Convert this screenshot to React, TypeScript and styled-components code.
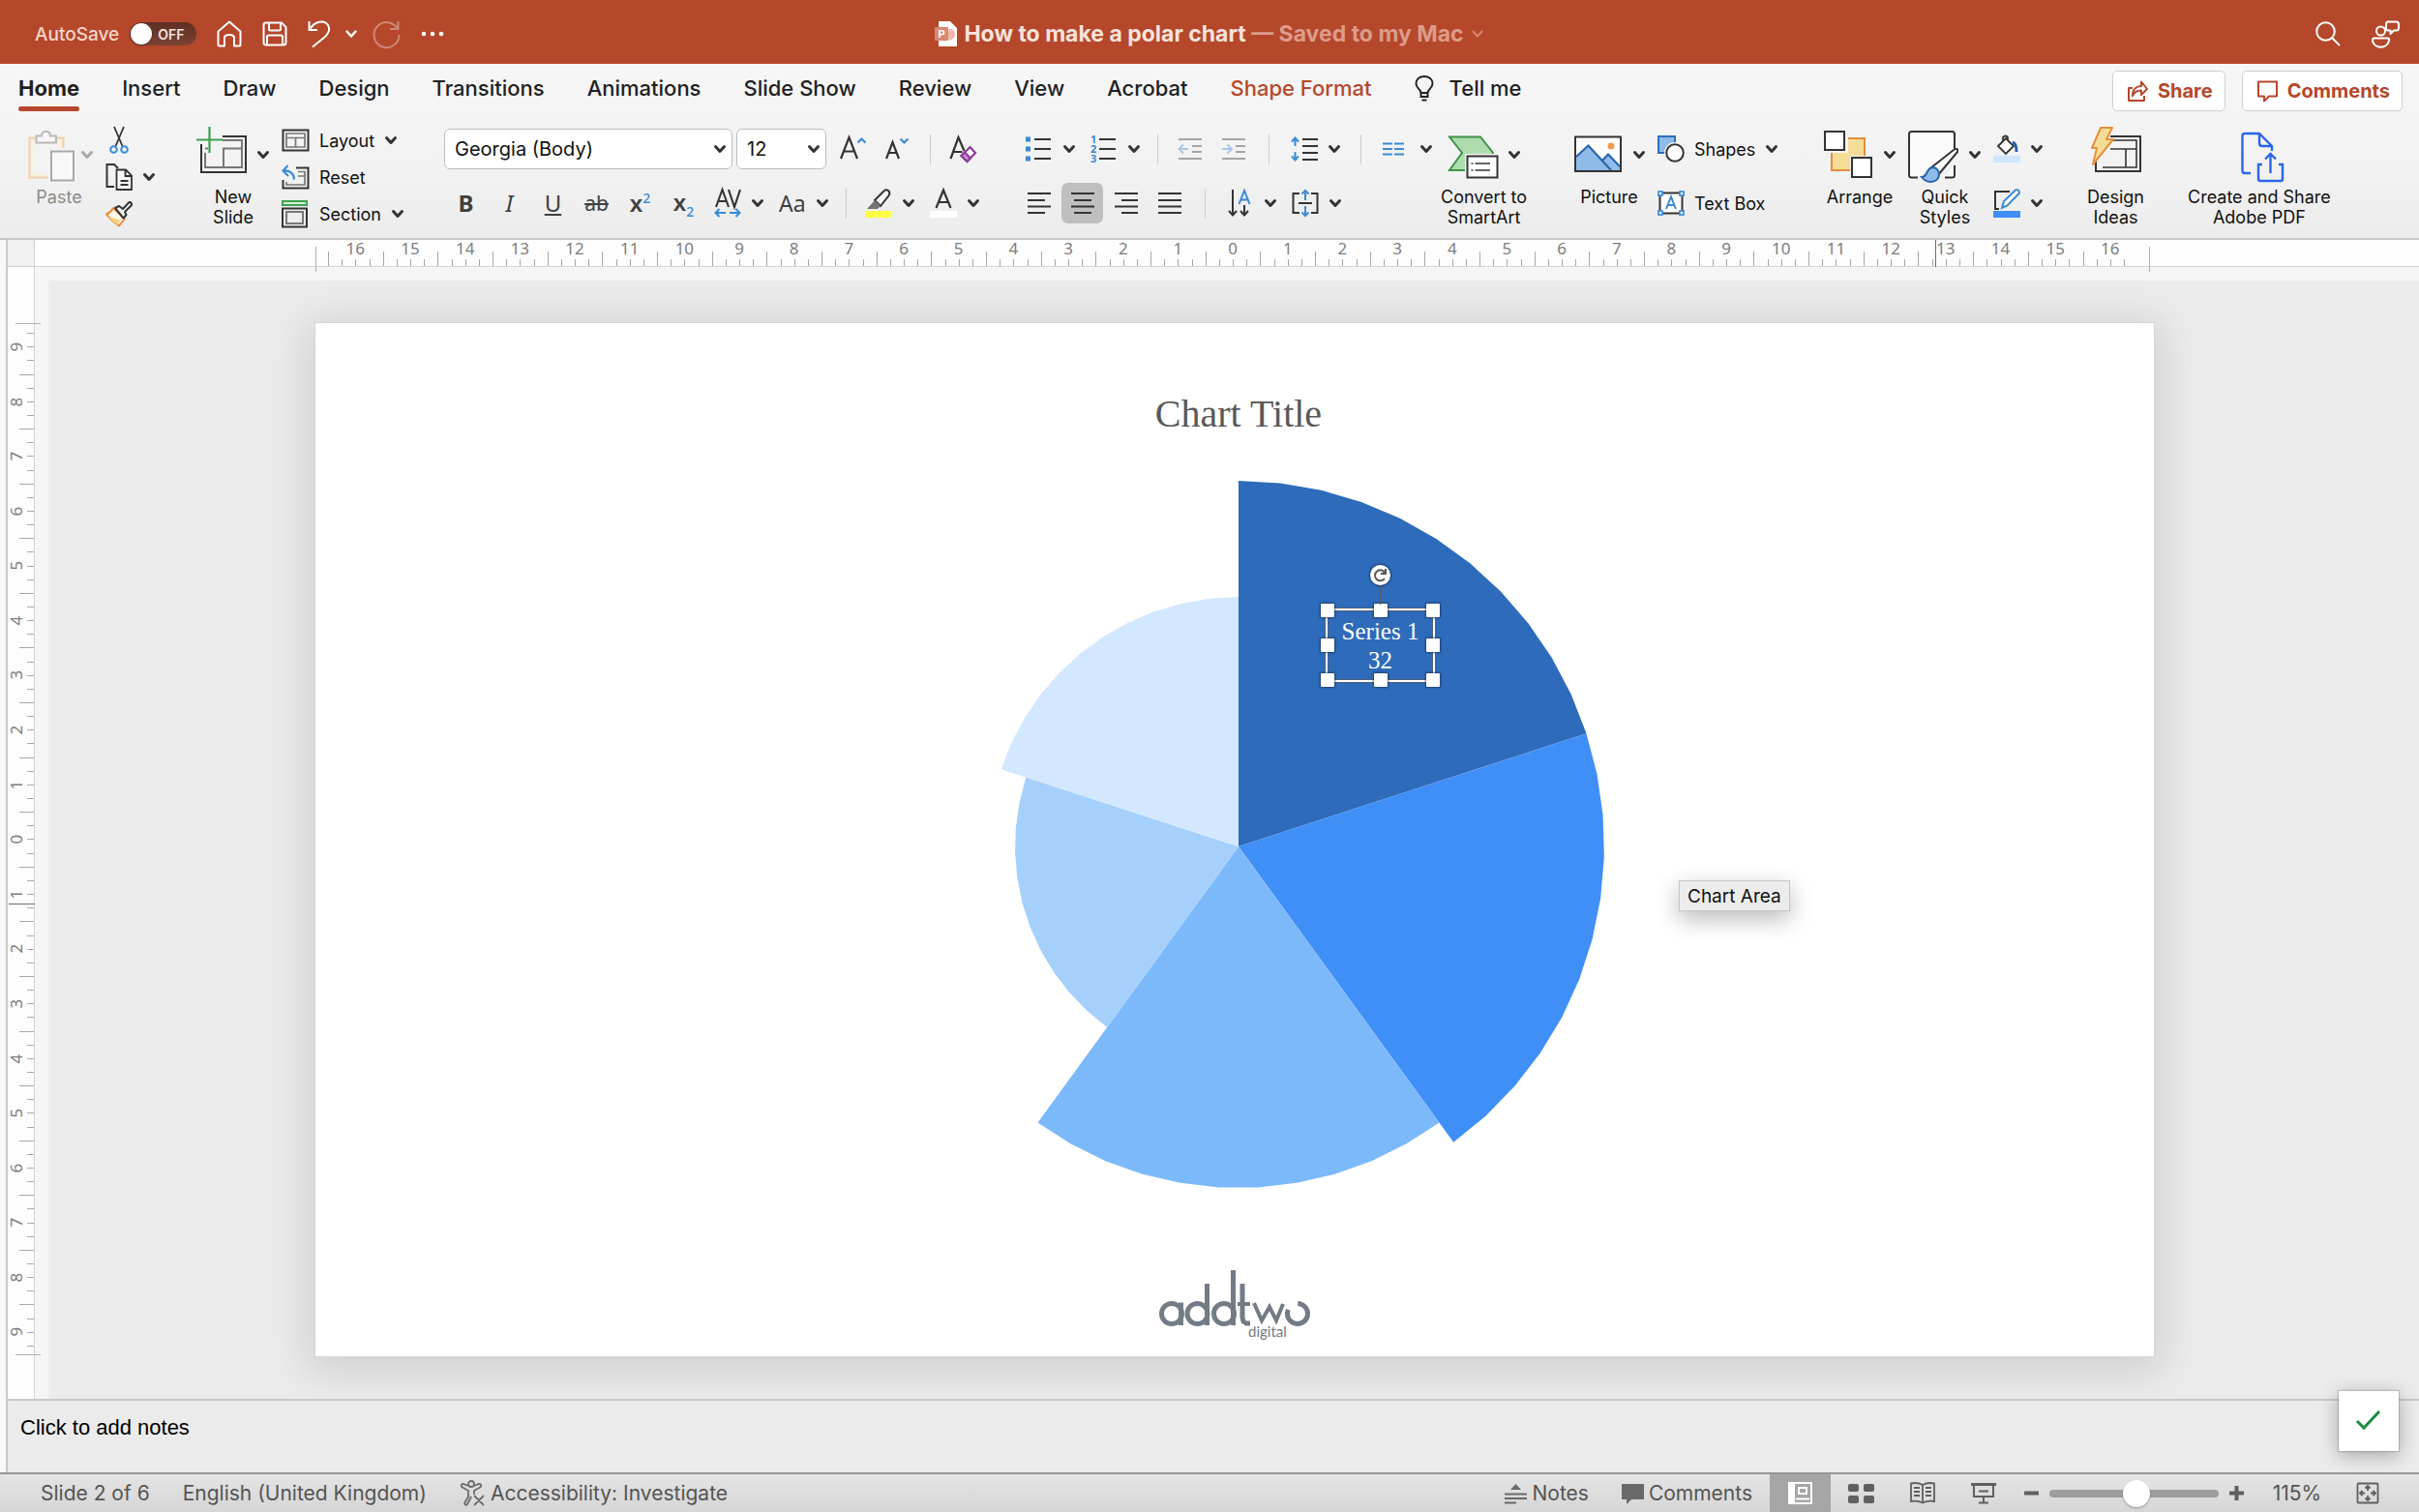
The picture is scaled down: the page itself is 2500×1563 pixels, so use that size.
import React from 'react';
import styled, { createGlobalStyle } from 'styled-components';

const UI = '"Inter", "Roboto", "Liberation Sans", sans-serif';
const RULER = '"Noto Sans", "DejaVu Sans", sans-serif';
const SERIF = 'Georgia, "Liberation Serif", serif';
const RED = '#b5472b';
const INK = '#333333';
const BLUE = '#3b8ad6';

const GlobalStyle = createGlobalStyle`
  *, *::before, *::after { box-sizing: border-box; }
  body { margin: 0; font-family: ${UI}; color: #111; background: #ebebeb; }
  button, select, textarea, input { font: inherit; color: inherit; margin: 0; }
  button { border: 0; background: none; padding: 0; cursor: pointer; }
  svg { display: block; flex: none; overflow: visible; }
  h1, h2, p { margin: 0; }
`;

const Page = styled.div`
  display: flex;
  flex-direction: column;
  min-height: 100vh;
`;

/* ---------- title bar ---------- */

const TitleBar = styled.header`
  display: grid;
  grid-template-columns: 1fr auto 1fr;
  align-items: center;
  height: 66px;
  padding: 4px 20px 0;
  background: ${RED};
  color: #fbe9e3;
`;

const QuickAccess = styled.div`
  display: flex;
  align-items: center;
  gap: 21px;
  padding-left: 16px;
`;

const History = styled.div`
  display: flex;
  align-items: center;
  gap: 15px;
`;

const AutoSave = styled.label`
  display: flex;
  align-items: center;
  gap: 11px;
  font-size: 19px;
  font-weight: 500;
  color: #f6d5cb;
`;

const Toggle = styled.span`
  display: flex;
  align-items: center;
  gap: 6px;
  width: 69px;
  height: 24px;
  padding: 0 1px;
  border-radius: 12px;
  background: linear-gradient(#5e2e22, #7c4335);
  font-size: 14px;
  font-weight: 600;
  color: #f3e3de;
  input {
    appearance: none;
    width: 22px;
    height: 22px;
    border-radius: 50%;
    background: #fff;
    box-shadow: 0 1px 2px rgba(0, 0, 0, 0.4);
  }
`;

const IconButton = styled.button<{ $faded?: boolean }>`
  display: flex;
  align-items: center;
  gap: 14px;
  color: #fff;
  opacity: ${(p) => (p.$faded ? 0.35 : 1)};
`;

const DocTitle = styled.h1`
  display: flex;
  align-items: center;
  gap: 7px;
  font-size: 23px;
  font-weight: 700;
  line-height: 28px;
  color: #f8e3dc;
  span { color: #dd9c8a; }
`;

const TitleRight = styled.div`
  display: flex;
  justify-content: flex-end;
  align-items: center;
  gap: 32px;
`;

/* ---------- ribbon ---------- */

const Ribbon = styled.div`
  background: linear-gradient(#f6f6f6, #f2f2f2 60%, #ececec);
  border-bottom: 2px solid #c6c6c6;
`;

const TabRow = styled.div`
  display: flex;
  justify-content: space-between;
  height: 60px;
  padding: 7px 17px 0 19px;
`;

const Tabs = styled.nav`
  display: flex;
  align-items: flex-start;
  gap: 44px;
`;

const Tab = styled.button<{ $active?: boolean; $accent?: boolean }>`
  display: flex;
  align-items: center;
  gap: 16px;
  height: 42px;
  padding-bottom: 6px;
  font-size: 22px;
  line-height: 28px;
  white-space: nowrap;
  font-weight: ${(p) => (p.$active ? 700 : 500)};
  color: ${(p) => (p.$accent ? RED : '#1f1f1f')};
  ${(p) =>
    p.$active &&
    `
    position: relative;
    &::after {
      content: '';
      position: absolute;
      left: 0;
      right: 0;
      top: 37px;
      height: 5px;
      border-radius: 3px;
      background: ${RED};
    }
  `}
`;

const TabActions = styled.div`
  display: flex;
  gap: 17px;
`;

const OutlineButton = styled.button`
  display: flex;
  align-items: center;
  gap: 10px;
  height: 42px;
  padding: 0 12px 0 15px;
  border: 1px solid #cfcfcf;
  border-radius: 5px;
  background: #fff;
  color: ${RED};
  font-size: 20px;
  font-weight: 700;
`;

const Groups = styled.div`
  display: flex;
  align-items: flex-start;
  height: 120px;
`;

const Group = styled.section<{ $w: number; $pad: number; $gap?: number }>`
  position: relative;
  display: flex;
  align-items: flex-start;
  gap: ${(p) => p.$gap ?? 12}px;
  flex: 0 0 ${(p) => p.$w}px;
  height: 114px;
  padding-left: ${(p) => p.$pad}px;
  & + &::before {
    content: '';
    position: absolute;
    left: 0;
    top: 0;
    width: 1px;
    height: 107px;
    background: #cccccc;
  }
`;

const CenterGroup = styled(Group)`
  justify-content: center;
`;

const BigButton = styled.button<{ $gap?: number; $disabled?: boolean }>`
  display: flex;
  flex-direction: column;
  align-items: center;
  font-size: 18px;
  line-height: 21px;
  text-align: center;
  white-space: pre-line;
  color: ${(p) => (p.$disabled ? '#8a8a8a' : '#111')};
  > span:first-child {
    display: flex;
    align-items: center;
    gap: ${(p) => p.$gap ?? 10}px;
    height: 67px;
  }
`;

const Stack = styled.div`
  display: flex;
  flex-direction: column;
`;

const Row = styled.div`
  display: flex;
  align-items: center;
  height: 56px;
`;

const SmallButton = styled.button<{ $h: number }>`
  display: flex;
  align-items: center;
  gap: 10px;
  height: ${(p) => p.$h}px;
  font-size: 18px;
  white-space: nowrap;
`;

const Tool = styled.button<{ $w?: number; $on?: boolean; $faded?: boolean }>`
  display: flex;
  align-items: center;
  justify-content: center;
  width: ${(p) => p.$w ?? 45}px;
  height: 42px;
  color: ${INK};
  opacity: ${(p) => (p.$faded ? 0.4 : 1)};
  border: 0 solid transparent;
  border-width: 0 1px;
  border-radius: 7px;
  background: ${(p) => (p.$on ? '#bfbfbf' : 'transparent')} padding-box;
`;

const SplitTool = styled.button<{ $flush?: boolean }>`
  display: flex;
  align-items: center;
  gap: 10px;
  height: 42px;
  width: ${(p) => (p.$flush ? 58 : 67)}px;
  padding-left: ${(p) => (p.$flush ? 0 : 9)}px;
`;

const Divider = styled.span<{ $w?: number }>`
  width: ${(p) => p.$w ?? 22}px;
  height: 31px;
  background: linear-gradient(#cccccc, #cccccc) center / 1px 100% no-repeat;
`;

const SelectBox = styled.label<{ $w: number }>`
  display: grid;
  align-items: center;
  width: ${(p) => p.$w}px;
  height: 42px;
  margin-right: 4px;
  border: 1px solid #bdbdbd;
  border-radius: 6px;
  background: #fff;
  font-size: 20px;
  > * { grid-area: 1 / 1; }
  select {
    appearance: none;
    width: 100%;
    height: 40px;
    padding: 0 30px 0 10px;
    border: 0;
    border-radius: 6px;
    background: none;
  }
  svg { justify-self: end; margin-right: 5px; }
`;

/* ---------- workspace ---------- */

const Workspace = styled.main`
  flex: 1;
  display: flex;
`;

const SideStrip = styled.div`
  flex: 0 0 8px;
  background: #f8f8f8;
  border-right: 2px solid #c8c8c8;
`;

const Editor = styled.div`
  flex: 1;
  min-width: 0;
  display: grid;
  grid-template-columns: 28px 1fr;
  grid-template-rows: 28px 1fr 76px;
`;

const Corner = styled.div`
  background: #f1f1f1;
  border: solid #d0d0d0;
  border-width: 0 1px 1px 0;
`;

const HRuler = styled.div`
  position: relative;
  padding: 0 278px 0 290px;
  background: #fdfdfd;
  border-bottom: 1px solid #d6d6d6;
`;

const HScale = styled.div`
  position: relative;
  display: flex;
  height: 27px;
  padding: 0 13px;
  &::before, &::after {
    content: '';
    position: absolute;
    top: 7px;
    height: 26px;
    width: 1px;
    background: #b0b0b0;
  }
  &::before { left: 0; }
  &::after { right: 0; }
`;

const HCell = styled.div`
  flex: 1;
  display: grid;
  font-family: ${RULER};
  font-size: 17px;
  line-height: 18px;
  color: #7d7d7d;
  text-align: center;
  > * { grid-area: 1 / 1; }
`;

const HTicks = styled.span`
  display: flex;
  align-items: flex-end;
  i { flex: 1; height: 7px; border-left: 1px solid #a8a8a8; }
  i:first-child { height: 15px; }
`;

const HMark = styled.span`
  position: absolute;
  left: 79.7%;
  top: 0;
  width: 1px;
  height: 28px;
  background: #6e6e6e;
`;

const VRuler = styled.div`
  position: relative;
  padding: 58px 0 45px;
  background: #fdfdfd;
  border-right: 1px solid #d6d6d6;
`;

const VScale = styled.div`
  position: relative;
  display: flow-root;
  height: 100%;
  &::before, &::after {
    content: '';
    position: absolute;
    left: 8px;
    width: 26px;
    height: 1px;
    background: #b0b0b0;
  }
  &::before { top: 0; }
  &::after { bottom: 0; }
`;

const VCells = styled.div`
  display: flex;
  flex-direction: column;
  height: calc(100% + 8px);
  margin: -4px 0;
`;

const VCell = styled.div`
  flex: 1;
  display: grid;
  font-family: ${RULER};
  font-size: 17px;
  line-height: 18px;
  color: #7d7d7d;
  > * { grid-area: 1 / 1; }
  b {
    font-weight: 400;
    writing-mode: vertical-rl;
    rotate: 180deg;
    width: 18px;
    text-align: center;
  }
`;

const VTicks = styled.span<{ $open?: boolean }>`
  display: flex;
  flex-direction: column;
  align-items: flex-end;
  i { flex: 1; width: 7px; border-top: 1px solid #a8a8a8; }
  i:first-child { width: 15px; ${(p) => p.$open && 'border-color: transparent;'} }
`;

const VMark = styled.span`
  position: absolute;
  top: 56.2%;
  left: 1px;
  width: 27px;
  height: 1px;
  background: #6e6e6e;
`;

const Stage = styled.div`
  padding: 14px 0 0 14px;
  background: #f5f5f5;
`;

const Canvas = styled.div`
  height: 100%;
  padding: 44px 274px 44px 276px;
  background: #ebebeb;
  overflow: hidden;
`;

const Slide = styled.article`
  display: flex;
  flex-direction: column;
  align-items: center;
  aspect-ratio: 1900 / 1068;
  padding-top: 71px;
  background: #fff;
  box-shadow: 0 0 0 1px #d6d6d6, 0 8px 40px 8px rgba(0, 0, 0, 0.12);
`;

const ChartFrame = styled.figure`
  position: relative;
  display: flex;
  flex-direction: column;
  align-items: center;
  gap: 46px;
  margin: 0 0 0 8px;
  h2 {
    font-family: ${SERIF};
    font-size: 40px;
    line-height: 46px;
    font-weight: 400;
    color: #595959;
  }
`;

const Plot = styled.div`
  position: relative;
  width: 756px;
  height: 732px;
`;

const DataLabel = styled.div`
  position: absolute;
  left: 468px;
  top: 132px;
  width: 113px;
  height: 76px;
  padding-top: 7px;
  border: 2px solid #fff;
  box-shadow: 0 0 0 1px rgba(90, 90, 90, 0.7), inset 0 0 0 1px rgba(90, 90, 90, 0.7);
  font-family: ${SERIF};
  font-size: 25px;
  line-height: 30px;
  text-align: center;
  color: #fff;
`;

const Handle = styled.i<{ $x: number; $y: number }>`
  position: absolute;
  left: calc(${(p) => p.$x}% - 7px);
  top: calc(${(p) => p.$y}% - 7px);
  width: 14px;
  height: 14px;
  background: #fff;
  border-radius: 1px;
  box-shadow: 0 0 2px 1px rgba(20, 40, 80, 0.65);
`;

const Rotator = styled.i`
  position: absolute;
  left: 44px;
  top: -47px;
  width: 21px;
  height: 21px;
  display: grid;
  place-items: center;
  border-radius: 50%;
  background: #fff;
  box-shadow: 0 0 2px 1px rgba(20, 40, 80, 0.65);
  &::after {
    content: '';
    position: absolute;
    top: 22px;
    left: 10px;
    width: 1px;
    height: 19px;
    background: #5a5a5a;
  }
`;

const Tooltip = styled.div`
  position: absolute;
  left: 833px;
  top: 413px;
  height: 32px;
  padding: 0 8px;
  border: 1px solid #c6c6c6;
  background: #ececec;
  box-shadow: 0 8px 24px rgba(0, 0, 0, 0.28);
  font-size: 19px;
  line-height: 31px;
  white-space: nowrap;
`;

const Logo = styled.div`
  margin-top: 83px;
`;

const Notes = styled.label`
  grid-column: 1 / -1;
  display: block;
  border-top: 2px solid #c9c9c9;
  background: #ebebeb;
  textarea {
    display: block;
    width: 100%;
    height: 74px;
    padding: 15px 13px;
    border: 0;
    outline: 0;
    resize: none;
    background: none;
    font-family: "Liberation Sans", Arial, sans-serif;
    font-size: 22px;
    line-height: 26px;
    color: #000;
  }
`;

const SaveBadge = styled.div`
  position: absolute;
  right: 21px;
  bottom: 63px;
  display: grid;
  place-items: center;
  width: 62px;
  height: 62px;
  background: #fff;
  box-shadow: 0 0 1px 1px rgba(0, 0, 0, 0.15), 0 4px 20px rgba(0, 0, 0, 0.3);
`;

/* ---------- status bar ---------- */

const StatusBar = styled.footer`
  display: flex;
  justify-content: space-between;
  height: 41px;
  padding: 0 41px 0 42px;
  border-top: 2px solid #979797;
  background: linear-gradient(#e4e4e4, #d6d6d6);
  color: #545454;
  font-size: 21px;
`;

const StatusSide = styled.div<{ $gap: number }>`
  display: flex;
  align-items: center;
  gap: ${(p) => p.$gap}px;
`;

const StatusItem = styled.button`
  display: flex;
  align-items: center;
  gap: 5px;
  height: 39px;
`;

const ViewButtons = styled.div`
  display: flex;
  margin-left: 18px;
`;

const ViewButton = styled.button<{ $on?: boolean }>`
  display: grid;
  place-items: center;
  width: 63px;
  height: 39px;
  background: ${(p) => (p.$on ? '#a6a6a6' : 'transparent')};
`;

const Zoom = styled.div`
  display: flex;
  align-items: center;
  gap: 11px;
  width: 227px;
  margin-left: 11px;
  input {
    appearance: none;
    flex: 1;
    min-width: 0;
    height: 8px;
    border-radius: 4px;
    background: #9d9d9d;
  }
  input::-webkit-slider-thumb {
    appearance: none;
    width: 28px;
    height: 28px;
    border-radius: 50%;
    background: #fff;
    box-shadow: 0 1px 2px rgba(0, 0, 0, 0.35);
  }
`;

const ZoomValue = styled.button`
  width: 56px;
  margin: 0 33px 0 27px;
`;

/* ---------- icons ---------- */

type IcoProps = { w: number; h: number; s?: string; sw?: number; children: React.ReactNode };
const Ico = ({ w, h, s = INK, sw = 2, children }: IcoProps) => (
  <svg width={w} height={h} viewBox={`0 0 ${w} ${h}`} fill="none" stroke={s} strokeWidth={sw} aria-hidden="true">
    {children}
  </svg>
);

const Chevron = ({ c = INK, sw = 3 }: { c?: string; sw?: number }) => (
  <Ico w={14} h={14} s={c} sw={sw}>
    <path d="M2.5 4.5 7 9.5l4.5-5" strokeLinecap="round" strokeLinejoin="round" />
  </Ico>
);

const Glyph = styled.span<{ $size?: number; $weight?: number }>`
  font-family: "Noto Sans", ${UI};
  font-size: ${(p) => p.$size ?? 24}px;
  font-weight: ${(p) => p.$weight ?? 400};
  line-height: 28px;
  color: #404040;
  sup, sub { font-size: 14px; line-height: 1; color: ${BLUE}; font-weight: 500; }
`;

const HomeIcon = () => (
  <Ico w={26} h={28} s="#fff">
    <path d="M1.5 11.5 13 1.5l11.5 10V25q0 1.5-1.5 1.5h-5V18q0-3-5-3t-5 3v8.5H3Q1.5 26.5 1.5 25Z" strokeLinejoin="round" />
  </Ico>
);
const SaveIcon = () => (
  <Ico w={26} h={26} s="#fff">
    <path d="M3.5 1.5H20l4.5 4.5v16q0 2.5-2.5 2.5H4q-2.5 0-2.5-2.5V4q0-2.5 2-2.5ZM7 2v6q0 1.5 1.5 1.5h9Q19 9.5 19 8V2M5 24v-8q0-1.5 1.5-1.5h13Q21 14.5 21 16v8" />
  </Ico>
);
const UndoIcon = () => (
  <Ico w={24} h={28} s="#fff">
    <path d="M1.5 1v9H10M2 9.5C7 1 17-1 21 5c3 5 0 9-3 12L5 27.5" />
  </Ico>
);
const RedoIcon = () => (
  <Ico w={29} h={29} s="#fff">
    <path d="M26.5 1v8H18M26 9A13 13 0 1 0 27.5 15" />
  </Ico>
);
const MoreIcon = () => (
  <Ico w={24} h={6} s="none">
    <g fill="#fff"><circle cx="3" cy="3" r="2.3" /><circle cx="12" cy="3" r="2.3" /><circle cx="21" cy="3" r="2.3" /></g>
  </Ico>
);
const DocIcon = () => (
  <Ico w={23} h={26} s="none">
    <path d="M4 0h12l7 7v19H4Z" fill="#fff" />
    <path d="M15 7.5a6 6 0 1 1-3 11Z" fill="#f0b9a8" />
    <rect x="0" y="6" width="14" height="14" rx="1" fill="#d98871" />
    <text x="7" y="17" fontFamily="Inter" fontSize="11" fontWeight="700" fill="#fff" textAnchor="middle">P</text>
  </Ico>
);
const SearchIcon = () => (
  <Ico w={26} h={26} s="#fff"><circle cx="10.5" cy="10.5" r="9.3" /><path d="m17 17 8 8" /></Ico>
);
const PresenceIcon = () => (
  <Ico w={29} h={29} s="#fff">
    <circle cx="9.5" cy="11" r="4.5" />
    <path d="M3 18.5h14q1.5 0 1 2.5c-1.5 9-15.5 9-17 0q-.5-2.5 2-2.5ZM17 1.5h8.5q2.5 0 2.5 2.5v4q0 2.5-2.5 2.5H23L19.5 14v-3.5H17q-2 0-2-2.5V4q0-2.5 2-2.5Z" strokeLinejoin="round" />
  </Ico>
);
const BulbIcon = () => (
  <Ico w={20} h={27} s="#222">
    <path d="M6.5 18C6 14 1.5 13 1.5 8.5 1.5 4 5 1 10 1s8.5 3 8.5 7.5c0 4.5-4.5 5.5-5 9.5ZM6.5 18v4h7v-4M7.5 25.5h5" />
  </Ico>
);
const ShareIcon = () => (
  <Ico w={21} h={22} s={RED}>
    <path d="M5 8H1v13h16v-5M5 16c0-7 4-10 9-10V1.5L20 9l-6 6v-4.5c-4 0-7 1-9 5.5Z" strokeLinejoin="round" />
  </Ico>
);
const CommentIcon = () => (
  <Ico w={21} h={22} s={RED}><path d="M1 1.5h19v15h-8l-5 5v-5H1Z" strokeLinejoin="round" /></Ico>
);

const PasteIcon = () => (
  <Ico w={52} h={58}>
    <path d="M5.5 11.5h35v41h-35Z" fill="#f7f0dc" stroke="#efd2ad" />
    <rect x="9" y="15" width="28" height="34" fill="#f3f3f3" stroke="none" />
    <path d="M12.5 16.5v-7H18q0-4.5 4.5-4.5t4.5 4.5h6v7Z" fill="#f7f7f7" stroke="#b9b9b9" />
    <rect x="25" y="22" width="28" height="36" fill="#f3f3f3" stroke="none" />
    <rect x="28" y="25.5" width="23" height="30" fill="#f8f8f8" stroke="#a9a9a9" />
  </Ico>
);
const CutIcon = () => (
  <Ico w={28} h={30}>
    <path d="M9 1l8.5 20M19 1l-8.5 20" strokeWidth="1.8" />
    <g stroke={BLUE}><circle cx="8.5" cy="24.5" r="3.3" /><circle cx="19.5" cy="24.5" r="3.3" /></g>
  </Ico>
);
const CopyIcon = () => (
  <Ico w={28} h={30}>
    <path d="M9 25H1.5V2H9l4 4" fill="none" />
    <path d="M11.5 7.5H21l6 6V28H11.5ZM20.5 8v6H27M15.5 19h8M15.5 23h8" fill="#fafafa" strokeWidth="1.8" />
  </Ico>
);
const BrushIcon = () => (
  <Ico w={28} h={28}>
    <path d="M8 8 20 19l-6 7.5Q6 21 1 14.5Q5 13 8 8Z" fill="#fdf6e6" stroke="#e98a35" strokeLinejoin="round" />
    <path d="m3 17 12 3.5-2 5Q7 22 3 17Z" fill="#f6d27f" stroke="none" />
    <path d="m10 8 4-2 4 3 6.5-7q3 0 2.5 3L20 12l1.5 3-3 3.5Z" fill="#fafafa" strokeLinejoin="round" />
  </Ico>
);
const NewSlideIcon = () => (
  <Ico w={52} h={58}>
    <path d="M27 10H51v37H5V18" />
    <path d="M27 14H47v28H9V27M27 22.5H47M28 22.5V42M9 22.5h3" stroke="#777" />
    <path d="M13.5 0v27M0 13.5h27" stroke="#3ba14f" strokeWidth="2.2" />
  </Ico>
);
const LayoutIcon = () => (
  <Ico w={29} h={24}>
    <rect x="1.5" y="1.5" width="26" height="21" />
    <path d="M5 5h19v14H5ZM5 9.5h19M14.5 9.5V19" stroke="#777" strokeWidth="1.7" />
  </Ico>
);
const ResetIcon = () => (
  <Ico w={29} h={26}>
    <path d="M15 3.5h12.5v21h-26V16" />
    <path d="M17 7.5h7V21H5v-3M17 12h7" stroke="#777" strokeWidth="1.7" />
    <path d="M6.5 1 1.5 6.5 7 12M2 6.5c6-1 11 3 11 9" stroke={BLUE} strokeWidth="2.2" />
  </Ico>
);
const SectionIcon = () => (
  <Ico w={29} h={29}>
    <rect x="1" y="1" width="25" height="4" stroke="#3ba14f" fill="#d7f0dc" />
    <rect x="1" y="8.5" width="25" height="19" />
    <rect x="5" y="12" width="17" height="12" stroke="#777" />
  </Ico>
);
const GrowIcon = ({ up }: { up?: boolean }) => (
  <Ico w={28} h={28} sw={2.2}>
    {up ? <path d="M2 24 10.5 2 19 24M5 16.5h11" /> : <path d="M3 24 9.5 7 16 24M5.5 18h8" />}
    <path d={up ? 'm19.5 7.5 4-4 4 4' : 'm17.5 3.5 4 4 4-4'} stroke={BLUE} />
  </Ico>
);
const ClearIcon = () => (
  <Ico w={28} h={28} sw={2.2}>
    <path d="M1.5 24 9.5 2l6 14M4.5 17h9" />
    <path d="m12.5 21 9-9 5.5 6-8.5 9Z" stroke="#8e3a9d" fill="#fff" />
    <path d="m12.5 21 3.5-3.5 6 6-3.5 3.5Z" stroke="#8e3a9d" fill="#c58fce" />
  </Ico>
);
const SpacingIcon = () => (
  <Ico w={28} h={30} sw={2.1}>
    <path d="M2 19 8.5 1 15 19M4 13h9M15 1l6 18L27 1" />
    <path d="M1 25h11M5.5 21 1.5 25l4 4M16 25h11M22.5 21l4 4-4 4" stroke={BLUE} />
  </Ico>
);
const HighlightIcon = () => (
  <Ico w={28} h={30}>
    <path d="M10 12 20 2q2-1.5 4 0t1 4.5L16 18Z" fill="#fafafa" />
    <path d="m10 12 6 6-3 3H2Z" fill="#757575" stroke="none" />
    <rect x="0" y="23" width="28" height="7" fill="#ffff45" stroke="none" />
  </Ico>
);
const FontColorIcon = () => (
  <Ico w={28} h={30} sw={2.2}>
    <path d="M6.5 20 14 1.5 21.5 20M9 14h10" />
    <rect x="0" y="23" width="28" height="7" fill="#fff" stroke="none" />
  </Ico>
);
const BulletsIcon = () => (
  <Ico w={28} h={28}>
    <path d="M9 4h17M9 14h17M9 24h17" />
    <path d="M0 4h5M0 14h5M0 24h5" stroke={BLUE} strokeWidth="5" />
  </Ico>
);
const NumbersIcon = () => (
  <Ico w={28} h={30}>
    <path d="M9 5h17M9 15h17M9 25h17" />
    <g fill={BLUE} stroke="none" fontFamily="Noto Sans" fontSize="11" fontWeight="700">
      <text x="0" y="9">1</text><text x="0" y="19">2</text><text x="0" y="29">3</text>
    </g>
  </Ico>
);
const IndentIcon = ({ out }: { out?: boolean }) => (
  <Ico w={26} h={26}>
    <path d="M1 3h24M15 10h10M15 16h10M1 23h24" />
    <path d={out ? 'M11 13H2M6 8.5 1.5 13 6 17.5' : 'M1 13h9M6.5 8.5 11 13l-4.5 4.5'} stroke={BLUE} />
  </Ico>
);
const LineSpacingIcon = () => (
  <Ico w={28} h={28}>
    <path d="M12 4h16M12 11h16M12 18h16M12 25h16" />
    <path d="M4.5 3v8M1 6.5l3.5-4 3.5 4M4.5 17v8M1 21.5l3.5 4 3.5-4" stroke={BLUE} />
  </Ico>
);
const ColumnsIcon = () => (
  <Ico w={28} h={16} s={BLUE}><path d="M0 2.5h10M12 2.5h10M0 8h10M12 8h10M0 13.5h10M12 13.5h10" /></Ico>
);
const AlignIcon = ({ d }: { d: string }) => <Ico w={26} h={26}><path d={d} /></Ico>;
const TextDirIcon = () => (
  <Ico w={28} h={30}>
    <path d="M6 1v26M2 23l4 4.5 4-4.5M18 17v10M14 23l4 4.5 4-4.5" />
    <path d="M12.5 16 18 2l5.5 14M14.5 11.5h7" stroke={BLUE} />
  </Ico>
);
const AlignTextIcon = () => (
  <Ico w={28} h={30}>
    <path d="M8 5H1.5v20H8M20 5h6.5v20H20M7 15h14" />
    <path d="M14 3v9M10.5 5.5 14 2l3.5 3.5M14 18v9M10.5 24.5 14 28l3.5-3.5" stroke={BLUE} />
  </Ico>
);
const SmartArtIcon = () => (
  <Ico w={52} h={58}>
    <path d="M2 10.5h32L47 27 40 45H2l13-18Z" fill="#aedcaf" stroke="#3f9349" />
    <rect x="18" y="28" width="34" height="29" fill="#f3f3f3" stroke="none" />
    <rect x="20.5" y="30.5" width="31" height="22" fill="#fff" />
    <path d="M28.5 38H44M28.5 45H44M24.5 38h2M24.5 45h2" strokeWidth="1.5" />
  </Ico>
);
const PictureIcon = () => (
  <Ico w={52} h={58}>
    <rect x="3" y="10.5" width="47" height="35.5" fill="#fff" />
    <path d="M4 31 16.5 19.5 40 45H4Z" fill="#8fbbe8" stroke="none" />
    <path d="m31 35 6-6.500L49 41v4h-9Z" fill="#8fbbe8" stroke="none" />
    <path d="m4 31 12.5-11.5L40 45M31 35l6-6.5L49 41" stroke="#2663ae" />
    <circle cx="40" cy="20" r="3.5" fill="#ef9a4a" stroke="none" />
  </Ico>
);
const ShapesIcon = () => (
  <Ico w={28} h={28}>
    <rect x="1" y="1" width="17" height="17" fill="#8fbbe8" stroke="#2f6fbd" />
    <circle cx="18" cy="18" r="11" fill="#f3f3f3" stroke="none" />
    <circle cx="18" cy="18" r="8.8" fill="#fff" />
  </Ico>
);
const TextBoxIcon = () => (
  <Ico w={28} h={26}>
    <rect x="2.5" y="2.5" width="23" height="21" fill="#fff" />
    <g stroke={BLUE} fill="#fff" strokeWidth="1.7">
      <rect x="1" y="1" width="4" height="4" /><rect x="23" y="1" width="4" height="4" />
      <rect x="1" y="21" width="4" height="4" /><rect x="23" y="21" width="4" height="4" />
    </g>
    <path d="M9 19 14 6.5 19 19M10.5 15h7" stroke={BLUE} />
  </Ico>
);
const ArrangeIcon = () => (
  <Ico w={52} h={58}>
    <rect x="9" y="12" width="34" height="33" fill="#f5dc97" stroke="#e58f3e" />
    <rect x="0" y="3" width="26" height="24" fill="#f3f3f3" stroke="none" />
    <rect x="28" y="30" width="24" height="26" fill="#f3f3f3" stroke="none" />
    <rect x="2" y="5" width="20" height="19" fill="#fff" />
    <rect x="30" y="32" width="20" height="20" fill="#fff" />
  </Ico>
);
const StylesIcon = () => (
  <Ico w={52} h={58}>
    <path d="M10 52.5H3.5Q1 52.5 1 50V7.5Q1 5 3.5 5h42Q48 5 48 7.5V23M48 40v10q0 2.5-2.5 2.5H38" fill="#fafafa" />
    <path d="M23 43 47 24q5-3 4 2L31 50Z" fill="#fafafa" />
    <path d="M14 52c7 0 4-10 12-10 8 1 9 15-3 15q-5 0-9-5Z" fill="#8fbbe8" stroke="#2663ae" />
  </Ico>
);
const FillIcon = () => (
  <Ico w={28} h={28}>
    <path d="m5 11 8-8 8 8-8 8ZM10 6V2q3-3 5 0v3" fill="#fff" strokeWidth="1.8" />
    <path d="M20 7q4 1 4 10" stroke="#2663ae" strokeWidth="3" />
    <rect x="0" y="21" width="28" height="7" fill="#cfe5ff" stroke="none" />
  </Ico>
);
const OutlineIcon = () => (
  <Ico w={28} h={30}>
    <path d="M17 3H2v18h4" />
    <path d="M9 20 11 13 23 1.5q4-1 4 3L14.5 17.5Z" stroke={BLUE} fill="#fff" />
    <rect x="0" y="23" width="28" height="7" fill="#3f8ff7" stroke="none" />
  </Ico>
);
const IdeasIcon = () => (
  <Ico w={52} h={58}>
    <path d="M20 10H51v36H5V36" />
    <path d="M22 14H47v28H12M20 23H47M36 23V42" strokeWidth="1.6" />
    <path d="M10 1h12l-6 12h7L2 39l4-17H1Z" fill="#f5dc97" stroke="#e58f3e" strokeLinejoin="round" />
  </Ico>
);
const PdfIcon = () => (
  <Ico w={52} h={58} s="#2a66e8" sw={2.4}>
    <path d="M17 48H11q-2.5 0-2.5-2.5V9.5Q8.5 7 11 7h15l13 13v5M26 7v10q0 3 3 3h10" strokeLinejoin="round" />
    <path d="M29 39h-4v15q0 2 2 2h21q2 0 2-2V39h-4M37.5 48V28M32 33.5 37.5 28l5.5 5.5" />
  </Ico>
);

const AccessIcon = () => (
  <Ico w={27} h={27} s="#6b6b6b" sw={1.8}>
    <circle cx="12" cy="4" r="3" />
    <path d="M9 6 4 4Q1 4 2 7l7 4v6L5 24q1 3 3 1l4-8M15 6l5-2q3 0 2 3l-7 4v4M15 16l10 10M25 16 15 26" />
  </Ico>
);
const NotesIcon = () => (
  <Ico w={23} h={24} s="#696969"><path d="M0 12.5h23M0 17h23M0 21.5h12" /><path d="M6 8h11l-5.5-6Z" fill="#696969" stroke="none" /></Ico>
);
const StatusCommentIcon = () => (
  <Ico w={23} h={22} s="none"><path d="M0 1h23v16H10l-5 5v-5H0Z" fill="#696969" /></Ico>
);
const NormalViewIcon = () => (
  <Ico w={25} h={23} s="#fff">
    <path d="M1 1h5v21H1Z" fill="#fff" />
    <path d="M6 1h18v21H6" />
    <rect x="11" y="6" width="8" height="6" />
    <path d="M8 17.5h14" />
  </Ico>
);
const SorterIcon = () => (
  <Ico w={27} h={20} s="none">
    <g fill="#5f5f5f"><rect width="11" height="8" rx="2" /><rect x="16" width="11" height="8" rx="2" /><rect y="12" width="11" height="8" rx="2" /><rect x="16" y="12" width="11" height="8" rx="2" /></g>
  </Ico>
);
const BookIcon = () => (
  <Ico w={26} h={23} s="#5f5f5f" sw={1.8}>
    <path d="M13 3Q8 0 1 1.5V20q7-1 12 1.5Q18 19 25 20V1.5Q18 0 13 3ZM13 3v18M4 6h6M4 10h6M4 14h6M16 6h6M16 10h6M16 14h6" />
  </Ico>
);
const ShowIcon = () => (
  <Ico w={26} h={23} s="#5f5f5f"><path d="M0 2.5h26" strokeWidth="3" /><path d="M3 4v11h20V4M8 9.5h10M13 15v6M8 21.5h10" /></Ico>
);
const FitIcon = () => (
  <Ico w={24} h={23} s="#5f5f5f" sw={1.8}>
    <rect x="1.5" y="1.5" width="21" height="20" rx="1" />
    <path d="M12 4v5M9.5 6.5 12 4l2.5 2.5M12 19v-5M9.5 16.5 12 19l2.5-2.5M4 11.5h5M6.5 9 4 11.5 6.5 14M20 11.5h-5M17.5 9l2.5 2.5-2.5 2.5" />
  </Ico>
);

/* ---------- chart ---------- */

const SLICES = [
  { r: 378, fill: '#2e6bba' },
  { r: 378, fill: '#408ff7' },
  { r: 353, fill: '#7cb9fb' },
  { r: 231, fill: '#a6d0fc' },
  { r: 258, fill: '#d3e8ff' },
];
const STEPS = 11;

const slicePoints = (index: number, r: number) => {
  const pts = ['378,378'];
  for (let k = 0; k <= STEPS; k++) {
    const a = ((index * STEPS + k) / (SLICES.length * STEPS)) * Math.PI * 2;
    pts.push(`${(378 + r * Math.sin(a)).toFixed(2)},${(378 - r * Math.cos(a)).toFixed(2)}`);
  }
  return pts.join(' ');
};

const PolarChart = () => (
  <svg width="756" height="732" viewBox="0 0 756 732" role="img" aria-label="Polar chart">
    {SLICES.map((s, i) => (
      <polygon key={i} points={slicePoints(i, s.r)} fill={s.fill} />
    ))}
  </svg>
);

const LogoMark = () => (
  <svg width="156" height="76" viewBox="0 0 156 76" fill="none" stroke="#737b86" strokeWidth="5" role="img" aria-label="addtwo">
    <circle cx="13" cy="46" r="10.5" />
    <circle cx="39.5" cy="46" r="10.5" />
    <circle cx="67" cy="46" r="10.5" />
    <line x1="22.5" y1="34.5" x2="22.5" y2="58" />
    <line x1="49.5" y1="15" x2="49.5" y2="58" />
    <line x1="76.5" y1="1" x2="76.5" y2="58" />
    <polyline points="86,15 86,50 87,54 90,56 94,56" />
    <line x1="81" y1="36" x2="94" y2="36" strokeWidth="4" />
    <polyline points="98,35 106,53 114,39 121,53 128,36" strokeWidth="4" />
    <circle cx="143" cy="46" r="10.5" strokeDasharray="53 13" transform="rotate(-88 143 46)" />
    <text x="92" y="70" stroke="none" fill="#737b86" fontFamily="Lato" fontSize="15">digital</text>
  </svg>
);

const H_LABELS = Array.from({ length: 33 }, (_, i) => Math.abs(i - 16));
const V_LABELS = Array.from({ length: 19 }, (_, i) => Math.abs(i - 9));
const HANDLES = [[0, 0], [50, 0], [100, 0], [0, 50], [100, 50], [0, 100], [50, 100], [100, 100]];
const TABS = ['Insert', 'Draw', 'Design', 'Transitions', 'Animations', 'Slide Show', 'Review', 'View', 'Acrobat'];

export default function App() {
  return (
    <Page>
      <GlobalStyle />
      <TitleBar>
        <QuickAccess>
          <AutoSave>
            AutoSave
            <Toggle><input type="checkbox" aria-label="AutoSave" />OFF</Toggle>
          </AutoSave>
          <IconButton aria-label="Home"><HomeIcon /></IconButton>
          <IconButton aria-label="Save"><SaveIcon /></IconButton>
          <History>
            <IconButton aria-label="Undo"><UndoIcon /><Chevron c="#fff" sw={2.5} /></IconButton>
            <IconButton aria-label="Redo" $faded><RedoIcon /></IconButton>
          </History>
          <IconButton aria-label="More"><MoreIcon /></IconButton>
        </QuickAccess>
        <DocTitle>
          <DocIcon />
          <div>How to make a polar chart <span>— Saved to my Mac</span></div>
          <Chevron c="#d58671" sw={2} />
        </DocTitle>
        <TitleRight>
          <IconButton aria-label="Search"><SearchIcon /></IconButton>
          <IconButton aria-label="Presence"><PresenceIcon /></IconButton>
        </TitleRight>
      </TitleBar>

      <Ribbon>
        <TabRow>
          <Tabs>
            <Tab $active>Home</Tab>
            {TABS.map((t) => <Tab key={t}>{t}</Tab>)}
            <Tab $accent>Shape Format</Tab>
            <Tab><BulbIcon />Tell me</Tab>
          </Tabs>
          <TabActions>
            <OutlineButton><ShareIcon />Share</OutlineButton>
            <OutlineButton><CommentIcon />Comments</OutlineButton>
          </TabActions>
        </TabRow>
        <Groups>
          <Group $w={181} $pad={25}>
            <BigButton $gap={6} $disabled><span><PasteIcon /><Chevron c="#a8a8a8" /></span>Paste</BigButton>
            <Stack>
              <SmallButton $h={38} aria-label="Cut"><CutIcon /></SmallButton>
              <SmallButton $h={38} aria-label="Copy"><CopyIcon /><Chevron /></SmallButton>
              <SmallButton $h={38} aria-label="Format painter"><BrushIcon /></SmallButton>
            </Stack>
          </Group>
          <Group $w={260} $pad={22}>
            <BigButton><span><NewSlideIcon /><Chevron /></span>{'New\nSlide'}</BigButton>
            <Stack>
              <SmallButton $h={38}><LayoutIcon />Layout<Chevron /></SmallButton>
              <SmallButton $h={38}><ResetIcon />Reset</SmallButton>
              <SmallButton $h={38}><SectionIcon />Section<Chevron /></SmallButton>
            </Stack>
          </Group>
          <Group $w={594} $pad={18}>
            <Stack>
              <Row>
                <SelectBox $w={298}>
                  <select aria-label="Font"><option>Georgia (Body)</option></select>
                  <Chevron />
                </SelectBox>
                <SelectBox $w={93}>
                  <select aria-label="Font size"><option>12</option></select>
                  <Chevron />
                </SelectBox>
                <Tool $w={46} aria-label="Increase font size"><GrowIcon up /></Tool>
                <Tool $w={46} aria-label="Decrease font size"><GrowIcon /></Tool>
                <Divider />
                <Tool $w={46} aria-label="Clear formatting"><ClearIcon /></Tool>
              </Row>
              <Row>
                <Tool><Glyph $weight={700}>B</Glyph></Tool>
                <Tool><Glyph as="i">I</Glyph></Tool>
                <Tool><Glyph as="u">U</Glyph></Tool>
                <Tool><Glyph as="s" $size={21}>ab</Glyph></Tool>
                <Tool><Glyph $weight={600}>x<sup>2</sup></Glyph></Tool>
                <Tool><Glyph $weight={600}>x<sub>2</sub></Glyph></Tool>
                <SplitTool aria-label="Character spacing"><SpacingIcon /><Chevron /></SplitTool>
                <SplitTool><Glyph $size={23}>Aa</Glyph><Chevron /></SplitTool>
                <Divider />
                <SplitTool aria-label="Highlight"><HighlightIcon /><Chevron /></SplitTool>
                <SplitTool aria-label="Font color"><FontColorIcon /><Chevron /></SplitTool>
              </Row>
            </Stack>
          </Group>
          <Group $w={568} $pad={16} $gap={2}>
            <Stack>
              <Row>
                <SplitTool aria-label="Bullets"><BulletsIcon /><Chevron /></SplitTool>
                <SplitTool aria-label="Numbering"><NumbersIcon /><Chevron /></SplitTool>
                <Divider />
                <Tool $faded aria-label="Decrease indent"><IndentIcon out /></Tool>
                <Tool $faded aria-label="Increase indent"><IndentIcon /></Tool>
                <Divider $w={28} />
                <SplitTool aria-label="Line spacing"><LineSpacingIcon /><Chevron /></SplitTool>
                <Divider $w={28} />
                <SplitTool aria-label="Columns"><ColumnsIcon /><Chevron /></SplitTool>
              </Row>
              <Row>
                <Tool aria-label="Align left"><AlignIcon d="M1 3h24M1 10h18M1 16.5h24M1 23h18" /></Tool>
                <Tool $on aria-label="Center"><AlignIcon d="M1 3h24M4 10h18M1 16.5h24M4 23h18" /></Tool>
                <Tool aria-label="Align right"><AlignIcon d="M1 3h24M8 10h17M1 16.5h24M8 23h17" /></Tool>
                <Tool aria-label="Justify"><AlignIcon d="M1 3h24M1 10h24M1 16.5h24M1 23h24" /></Tool>
                <Divider $w={28} />
                <SplitTool aria-label="Text direction"><TextDirIcon /><Chevron /></SplitTool>
                <SplitTool aria-label="Align text"><AlignTextIcon /><Chevron /></SplitTool>
              </Row>
            </Stack>
            <BigButton><span><SmartArtIcon /><Chevron /></span>{'Convert to\nSmartArt'}</BigButton>
          </Group>
          <Group $w={259} $pad={22}>
            <BigButton><span><PictureIcon /><Chevron /></span>Picture</BigButton>
            <Stack>
              <SmallButton $h={56}><ShapesIcon />Shapes<Chevron /></SmallButton>
              <SmallButton $h={56}><TextBoxIcon />Text Box</SmallButton>
            </Stack>
          </Group>
          <Group $w={272} $pad={22}>
            <BigButton><span><ArrangeIcon /><Chevron /></span>Arrange</BigButton>
            <BigButton><span><StylesIcon /><Chevron /></span>{'Quick\nStyles'}</BigButton>
            <Stack>
              <Row><SplitTool $flush aria-label="Shape fill"><FillIcon /><Chevron /></SplitTool></Row>
              <Row><SplitTool $flush aria-label="Shape outline"><OutlineIcon /><Chevron /></SplitTool></Row>
            </Stack>
          </Group>
          <CenterGroup $w={105} $pad={0}>
            <BigButton><span><IdeasIcon /></span>{'Design\nIdeas'}</BigButton>
          </CenterGroup>
          <Group $w={190} $pad={22}>
            <BigButton><span><PdfIcon /></span>{'Create and Share\nAdobe PDF'}</BigButton>
          </Group>
        </Groups>
      </Ribbon>

      <Workspace>
        <SideStrip />
        <Editor>
          <Corner />
          <HRuler>
            <HScale>
              {H_LABELS.map((n, i) => (
                <HCell key={i}>
                  <span>{n}</span>
                  <HTicks><i /><i /><i /><i /></HTicks>
                </HCell>
              ))}
            </HScale>
            <HMark />
          </HRuler>
          <VRuler>
            <VScale>
              <VCells>
                {V_LABELS.map((n, i) => (
                  <VCell key={i}>
                    <b>{n}</b>
                    <VTicks $open={i === 0}><i /><i /><i /><i /></VTicks>
                  </VCell>
                ))}
              </VCells>
            </VScale>
            <VMark />
          </VRuler>
          <Stage>
            <Canvas>
              <Slide>
                <ChartFrame>
                  <h2>Chart Title</h2>
                  <Plot>
                    <PolarChart />
                    <DataLabel>
                      <p>Series 1</p>
                      <p>32</p>
                      {HANDLES.map(([x, y]) => <Handle key={`${x}-${y}`} $x={x} $y={y} />)}
                      <Rotator>
                        <Ico w={15} h={15} s="#5a5a5a"><path d="M13 1v5H8M12.5 5.5A5.5 5.5 0 1 0 12 11" /></Ico>
                      </Rotator>
                    </DataLabel>
                    <Tooltip role="tooltip">Chart Area</Tooltip>
                  </Plot>
                </ChartFrame>
                <Logo><LogoMark /></Logo>
              </Slide>
            </Canvas>
          </Stage>
          <Notes>
            <textarea aria-label="Notes" defaultValue="Click to add notes" />
          </Notes>
        </Editor>
      </Workspace>

      <StatusBar>
        <StatusSide $gap={34}>
          <StatusItem>Slide 2 of 6</StatusItem>
          <StatusItem>English (United Kingdom)</StatusItem>
          <StatusItem><AccessIcon />Accessibility: Investigate</StatusItem>
        </StatusSide>
        <StatusSide $gap={0}>
          <StatusSide $gap={34}>
            <StatusItem><NotesIcon />Notes</StatusItem>
            <StatusItem><StatusCommentIcon />Comments</StatusItem>
          </StatusSide>
          <ViewButtons>
            <ViewButton $on aria-label="Normal"><NormalViewIcon /></ViewButton>
            <ViewButton aria-label="Slide sorter"><SorterIcon /></ViewButton>
            <ViewButton aria-label="Reading view"><BookIcon /></ViewButton>
            <ViewButton aria-label="Slide show"><ShowIcon /></ViewButton>
          </ViewButtons>
          <Zoom>
            <Ico w={15} h={15} s="#5f5f5f" sw={4}><path d="M0 7.5h15" /></Ico>
            <input type="range" min="0" max="100" defaultValue="52" aria-label="Zoom" />
            <Ico w={15} h={15} s="#5f5f5f" sw={4}><path d="M0 7.5h15M7.5 0v15" /></Ico>
          </Zoom>
          <ZoomValue>115%</ZoomValue>
          <FitIcon />
        </StatusSide>
      </StatusBar>
      <SaveBadge>
        <Ico w={28} h={24} s="#1a8f3c" sw={3}><path d="m2 12 7 7L25 2" /></Ico>
      </SaveBadge>
    </Page>
  );
}
